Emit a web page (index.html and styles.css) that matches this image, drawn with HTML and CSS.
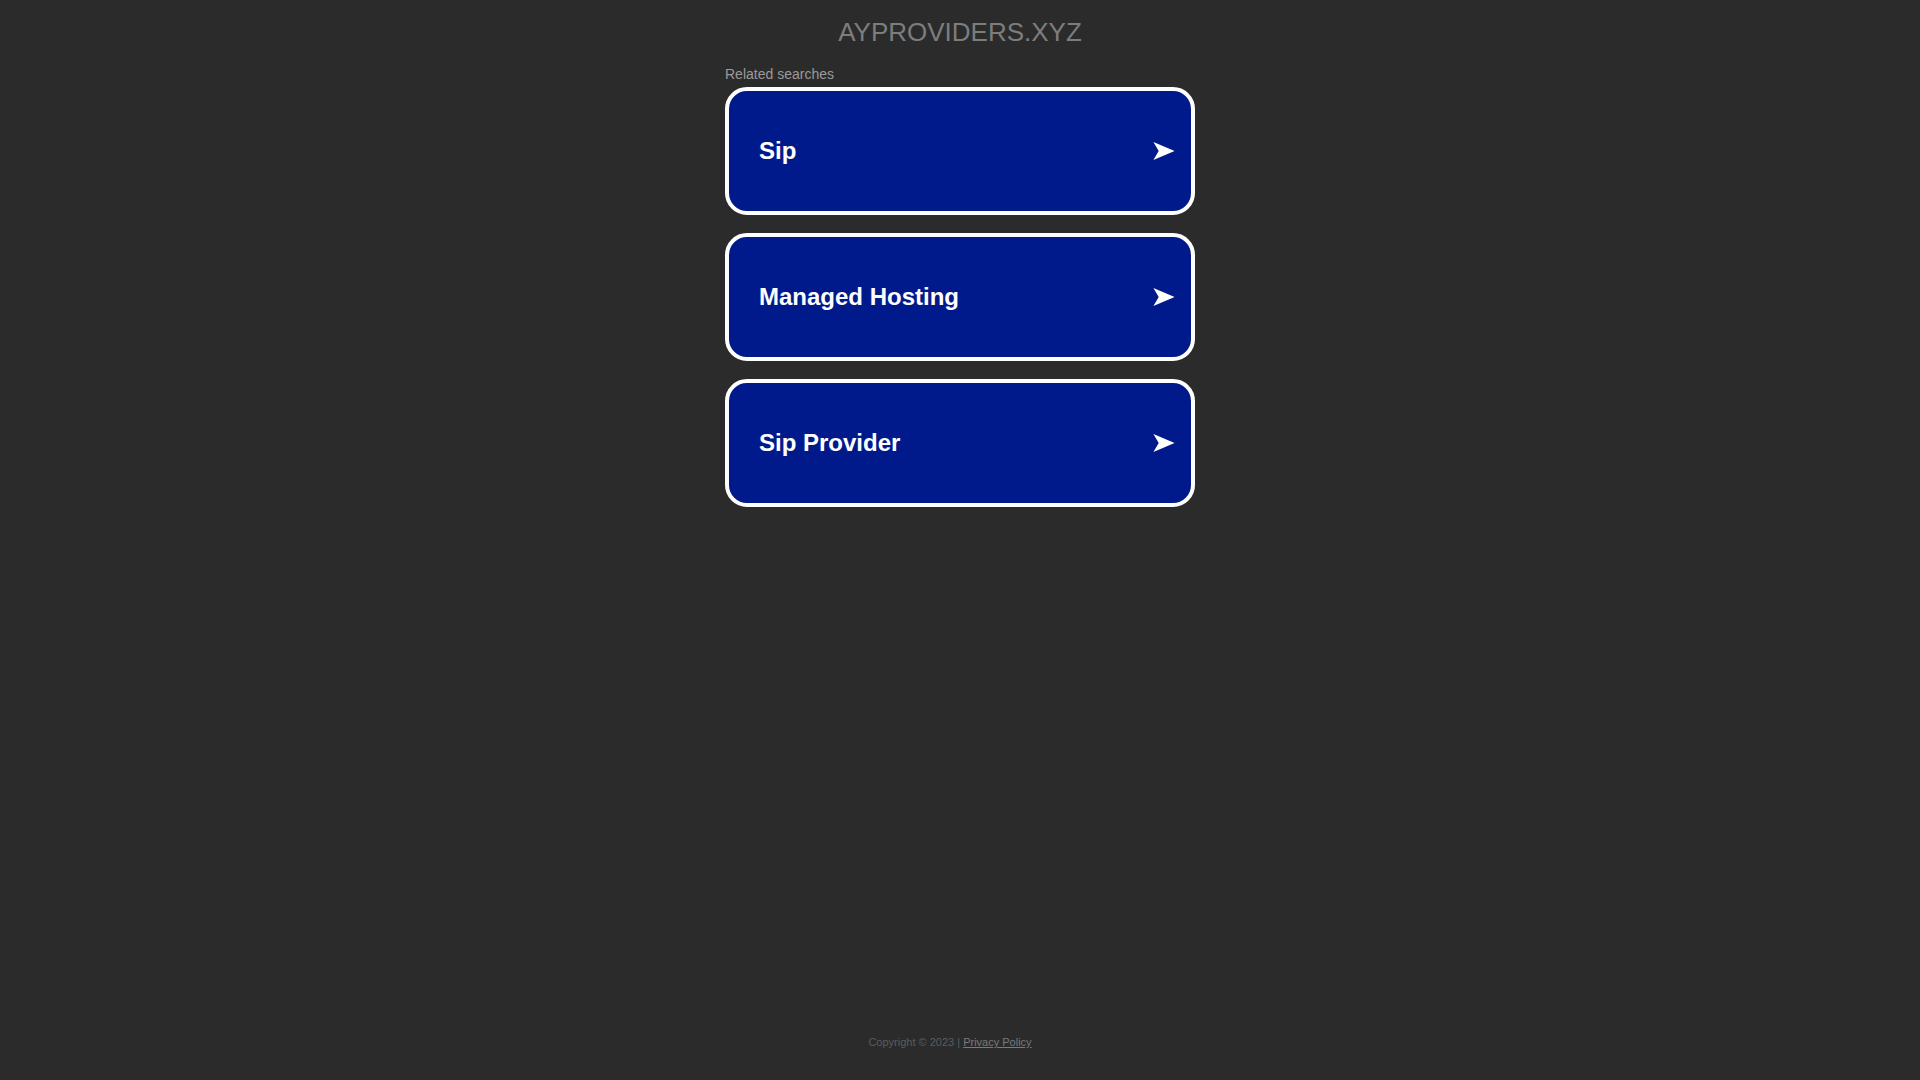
FILE: index.html
```html
<!DOCTYPE html>
<html lang="en">
<head>
<meta charset="utf-8">
<title>ayproviders.xyz</title>
<link rel="stylesheet" href="styles.css">
</head>
<body>
<div class="page">
  <main class="content">
    <h1 class="domain">AYPROVIDERS.XYZ</h1>
    <section class="related">
      <div class="related-title">Related searches</div>
      <ul class="list">
        <li><a class="item" href="#"><span class="label">Sip</span><svg class="arrow" viewBox="0 0 20 17" width="22" height="18"><path d="M0 0 L20 8.5 L0 17 L5 8.5 Z" fill="#fff"/></svg></a></li>
        <li><a class="item" href="#"><span class="label">Managed Hosting</span><svg class="arrow" viewBox="0 0 20 17" width="22" height="18"><path d="M0 0 L20 8.5 L0 17 L5 8.5 Z" fill="#fff"/></svg></a></li>
        <li><a class="item" href="#"><span class="label">Sip Provider</span><svg class="arrow" viewBox="0 0 20 17" width="22" height="18"><path d="M0 0 L20 8.5 L0 17 L5 8.5 Z" fill="#fff"/></svg></a></li>
      </ul>
    </section>
  </main>
  <footer class="footer">Copyright © 2023 | <a class="privacy" href="#">Privacy Policy</a></footer>
</div>
</body>
</html>
```

FILE: styles.css
```css
html, body {
  margin: 0;
  padding: 0;
  background: #2b2b2b;
  font-family: Arial, "Liberation Sans", sans-serif;
}
.page {
  min-height: 100vh;
  display: flex;
  flex-direction: column;
  align-items: center;
  box-sizing: border-box;
  padding-bottom: 32px;
}
.content {
  width: 470px;
  flex: 1;
}
.domain {
  margin: 0;
  padding-top: 18px;
  text-align: center;
  font-size: 26px;
  font-weight: normal;
  color: #7d7d7d;
  line-height: 28.6px;
}
.related {
  margin-top: 19px;
}
.related-title {
  font-size: 14px;
  line-height: 16px;
  color: #9a9a9a;
  margin-bottom: 5px;
}
.list {
  list-style: none;
  margin: 0;
  padding: 0;
  display: flex;
  flex-direction: column;
  gap: 18px;
}
.item {
  display: flex;
  align-items: center;
  justify-content: space-between;
  box-sizing: border-box;
  height: 128px;
  border: 4px solid #fff;
  border-radius: 22px;
  background: #011a8b;
  padding: 0 16px 0 30px;
  text-decoration: none;
}
.label {
  color: #fff;
  font-size: 24px;
  font-weight: bold;
}
.arrow {
  display: block;
}
.footer {
  font-size: 11px;
  line-height: 12px;
  color: #5c5c5c;
  padding-right: 20px;
}
.privacy {
  color: #7a7a7a;
  text-decoration: underline;
}
```
